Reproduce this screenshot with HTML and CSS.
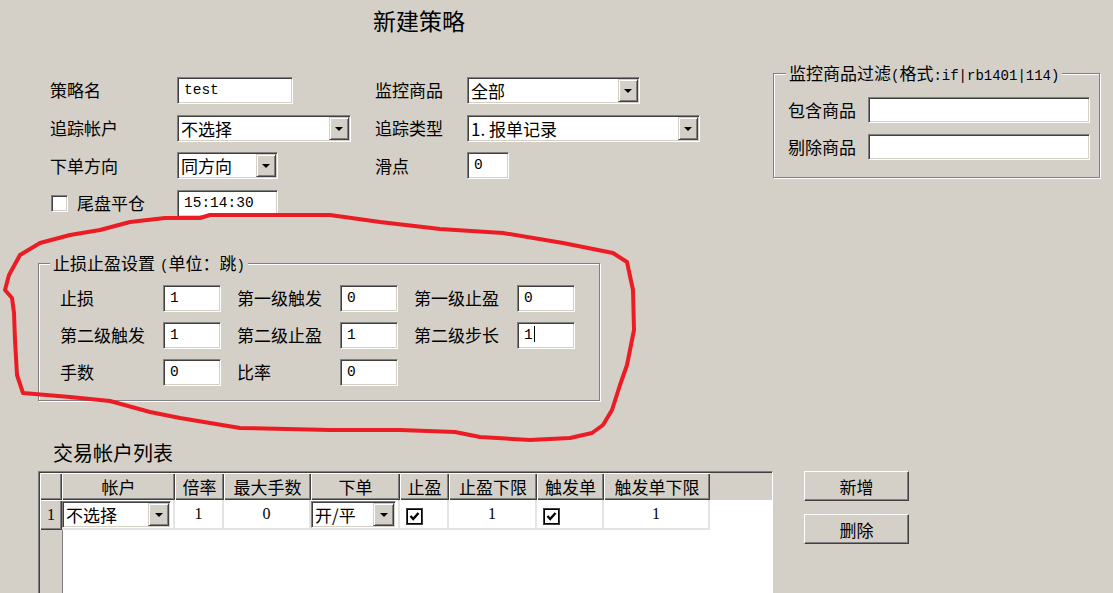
FILE: index.html
```html
<!DOCTYPE html>
<html lang="zh-CN">
<head>
<meta charset="utf-8">
<title>新建策略</title>
<link rel="stylesheet" href="styles.css">
</head>
<body>
<div class="page">
  <div class="title">新建策略</div>

  <div class="top">
    <div class="form">
      <span class="lbl">策略名</span>
      <div class="field"><div class="edit mono w116">test</div></div>
      <span class="lbl">监控商品</span>
      <div class="field"><div class="combo w173"><span class="val">全部</span><span class="drop"></span></div></div>

      <span class="lbl">追踪帐户</span>
      <div class="field"><div class="combo w174"><span class="val">不选择</span><span class="drop"></span></div></div>
      <span class="lbl">追踪类型</span>
      <div class="field"><div class="combo w233"><span class="val">1. 报单记录</span><span class="drop"></span></div></div>

      <span class="lbl">下单方向</span>
      <div class="field"><div class="combo w101"><span class="val">同方向</span><span class="drop"></span></div></div>
      <span class="lbl">滑点</span>
      <div class="field"><div class="edit mono w42">0</div></div>

      <span class="lbl chk-lbl"><span class="check"></span>尾盘平仓</span>
      <div class="field"><div class="edit mono w101">15:14:30</div></div>
    </div>

    <fieldset class="group filter">
      <legend>监控商品过滤<span class="m">(</span>格式<span class="m">:if|rb1401|114)</span></legend>
      <div class="filter-grid">
        <span class="lbl">包含商品</span>
        <div class="edit"></div>
        <span class="lbl">剔除商品</span>
        <div class="edit"></div>
      </div>
    </fieldset>
  </div>

  <fieldset class="group stop">
    <legend>止损止盈设置<span class="m sp">(</span>单位：跳<span class="m">)</span></legend>
    <div class="stop-grid">
      <span class="lbl">止损</span><div class="edit mono">1</div>
      <span class="lbl">第一级触发</span><div class="edit mono">0</div>
      <span class="lbl">第一级止盈</span><div class="edit mono">0</div>

      <span class="lbl">第二级触发</span><div class="edit mono">1</div>
      <span class="lbl">第二级止盈</span><div class="edit mono">1</div>
      <span class="lbl">第二级步长</span><div class="edit mono">1<span class="caret"></span></div>

      <span class="lbl">手数</span><div class="edit mono">0</div>
      <span class="lbl">比率</span><div class="edit mono">0</div>
    </div>
  </fieldset>

  <div class="list-title">交易帐户列表</div>

  <div class="bottom">
    <div class="grid">
      <table class="tbl">
        <colgroup>
          <col class="k-rh"><col class="k-acc"><col class="k-mul"><col class="k-max"><col class="k-ord">
          <col class="k-tp"><col class="k-tpl"><col class="k-trg"><col class="k-trl"><col>
        </colgroup>
        <thead>
          <tr>
            <th class="hd rh"></th>
            <th class="hd">帐户</th>
            <th class="hd">倍率</th>
            <th class="hd">最大手数</th>
            <th class="hd">下单</th>
            <th class="hd">止盈</th>
            <th class="hd">止盈下限</th>
            <th class="hd">触发单</th>
            <th class="hd">触发单下限</th>
            <th class="fill"></th>
          </tr>
        </thead>
        <tbody>
          <tr>
            <th class="hd rh num">1</th>
            <td><div class="combo cell-combo"><span class="val">不选择</span><span class="drop"></span></div></td>
            <td class="num">1</td>
            <td class="num">0</td>
            <td><div class="combo cell-combo"><span class="val">开/平</span><span class="drop"></span></div></td>
            <td><span class="check on"><svg viewBox="0 0 13 13" width="13" height="13"><polyline points="2.5,6 5.2,9 10.5,3" fill="none" stroke="#000" stroke-width="2.4"/></svg></span></td>
            <td class="num">1</td>
            <td><span class="check on"><svg viewBox="0 0 13 13" width="13" height="13"><polyline points="2.5,6 5.2,9 10.5,3" fill="none" stroke="#000" stroke-width="2.4"/></svg></span></td>
            <td class="num">1</td>
            <td class="blank"></td>
          </tr>
        </tbody>
      </table>
    </div>

    <div class="btns">
      <button class="btn">新增</button>
      <button class="btn">删除</button>
    </div>
  </div>

  <svg class="scribble" viewBox="0 0 1113 593" width="1113" height="593">
    <polyline fill="none" stroke="#ec1c24" stroke-width="4" stroke-linejoin="round" stroke-linecap="round"
      points="100,230 130,222 165,218 200,218 210,215 330,215 380,222 440,229 503,233 563,243 613,253 627,262 633,290 634,330 627,365 620,385 612,410 603,425 592,433 570,438 530,440 480,437 455,432 400,430 330,430 240,428 180,418 150,412 110,401 70,397 23,393 17,375 15,340 14,313 12,298 5,290 9,275 20,255 40,243 70,235 100,230"/>
  </svg>
</div>
</body>
</html>
```

FILE: styles.css
```css
html, body {
  margin: 0;
  padding: 0;
  background: #d4d0c8;
}

body {
  font-family: "Noto Sans CJK SC", "Noto Sans", sans-serif;
  font-size: 17px;
  color: #000;
  line-height: 1.2;
}

.page {
  position: relative;
  width: 1113px;
  height: 593px;
  overflow: hidden;
  background: #d4d0c8;
}

.title {
  height: 40px;
  line-height: 40px;
  padding-left: 373px;
  font-size: 23px;
}

/* ---------- top form ---------- */
.top {
  display: flex;
  align-items: flex-start;
}

.form {
  margin-left: 50px;
  margin-top: 37px;
  display: grid;
  grid-template-columns: 127px 198px 92px 233px;
  grid-auto-rows: 27px;
  row-gap: 10.7px;
  align-items: center;
}

.field {
  display: flex;
  align-items: center;
}

.lbl {
  white-space: nowrap;
}

.chk-lbl {
  display: flex;
  align-items: center;
  gap: 9px;
  margin-left: 1px;
}

/* sunken edit box */
.edit {
  box-sizing: border-box;
  height: 27px;
  background: #fff;
  border: 1px solid;
  border-color: #808080 #fff #fff #808080;
  box-shadow: inset 1px 1px 0 #404040, inset -1px -1px 0 #d4d0c8;
  padding-left: 6px;
  line-height: 25px;
  white-space: nowrap;
  overflow: hidden;
}

.mono {
  font-family: "Liberation Mono", "DejaVu Sans Mono", monospace;
  font-size: 14.5px;
}

.caret {
  display: inline-block;
  width: 1px;
  height: 16px;
  background: #000;
  vertical-align: -3px;
  margin-left: 1px;
}

.w116 { width: 116px; }
.w42 { width: 42px; }
.w101 { width: 101px; }
.w173 { width: 173px; }
.w174 { width: 174px; }
.w233 { width: 233px; }

/* combo box */
.combo {
  box-sizing: border-box;
  height: 27px;
  background: #fff;
  border: 1px solid;
  border-color: #808080 #fff #fff #808080;
  box-shadow: inset 1px 1px 0 #404040, inset -1px -1px 0 #d4d0c8;
  display: flex;
  align-items: stretch;
  padding: 1px;
}

.combo .val {
  flex: 1;
  padding-left: 2px;
  line-height: 23px;
  white-space: nowrap;
  overflow: hidden;
}

.drop {
  box-sizing: border-box;
  width: 20px;
  flex: none;
  background: #d4d0c8;
  border: 1px solid;
  border-color: #d4d0c8 #404040 #404040 #d4d0c8;
  box-shadow: inset 1px 1px 0 #fff, inset -1px -1px 0 #808080;
  display: flex;
  align-items: center;
  justify-content: center;
}

.drop::after {
  content: "";
  width: 0;
  height: 0;
  border-left: 4px solid transparent;
  border-right: 4px solid transparent;
  border-top: 4px solid #000;
  margin-top: 1px;
}

/* checkbox */
.check {
  box-sizing: border-box;
  display: inline-flex;
  align-items: center;
  justify-content: center;
  width: 17px;
  height: 17px;
  flex: none;
  background: #fff;
  border: 1px solid;
  border-color: #808080 #fff #fff #808080;
  box-shadow: inset 1px 1px 0 #404040, inset -1px -1px 0 #d4d0c8;
}

.check.on {
  border-color: #404040;
  box-shadow: inset 1px 1px 0 #000, inset -1px -1px 0 #000;
}

/* ---------- group boxes ---------- */
.group {
  box-sizing: border-box;
  margin: 0;
  padding: 0;
  min-width: 0;
  border: 1px solid #808080;
  box-shadow: inset 1px 1px 0 #fff, 1px 1px 0 #fff;
}

.group legend {
  box-sizing: border-box;
  height: 20px;
  padding: 0 3px;
  line-height: 20px;
  background: #d4d0c8;
  white-space: nowrap;
}

.m {
  font-family: "Liberation Mono", "DejaVu Sans Mono", monospace;
  font-size: 14px;
  line-height: 1;
}

.m.sp {
  margin-left: 5px;
}

.filter {
  width: 327px;
  margin-left: 73px;
  margin-top: 23px;
}

.filter legend {
  margin-left: 12px;
}

.filter-grid {
  margin: 14px 0 17px 14px;
  display: grid;
  grid-template-columns: 80px 222px;
  grid-auto-rows: 26px;
  row-gap: 11px;
  align-items: center;
}

.filter-grid .edit {
  height: 26px;
}

.stop {
  width: 562px;
  margin-left: 38px;
  margin-top: 36px;
}

.stop legend {
  margin-left: 11px;
}

.stop-grid {
  margin: 12px 0 14px 21px;
  display: grid;
  grid-template-columns: 87px 58px 87px 58px 87px 58px;
  column-gap: 16px;
  grid-auto-rows: 27px;
  row-gap: 10px;
  align-items: center;
}

/* ---------- account list ---------- */
.list-title {
  margin-top: 40px;
  margin-bottom: 6px;
  padding-left: 53px;
  font-size: 20px;
  line-height: 24px;
}

.bottom {
  display: flex;
  align-items: flex-start;
}

.grid {
  box-sizing: border-box;
  width: 735px;
  height: 140px;
  margin-left: 38px;
  border: 1px solid;
  border-color: #808080 #fff #fff #808080;
  box-shadow: inset 1px 1px 0 #404040;
  padding: 1px 0 0 1px;
  background:
    linear-gradient(to right, #d4d0c8 23px, #808080 23px, #808080 24px, #fff 24px);
}

.tbl {
  width: 732px;
  table-layout: fixed;
  border-collapse: separate;
  border-spacing: 0;
}

.k-rh { width: 22px; }
.k-acc { width: 113px; }
.k-mul { width: 49px; }
.k-max { width: 87px; }
.k-ord { width: 89px; }
.k-tp { width: 49px; }
.k-tpl { width: 88px; }
.k-trg { width: 67px; }
.k-trl { width: 106px; }

.tbl th, .tbl td {
  padding: 0;
  font-weight: normal;
}

.tbl thead th {
  height: 27px;
  background: #d4d0c8;
}

.hd {
  box-sizing: border-box;
  background: #d4d0c8;
  box-shadow: inset 1px 1px 0 #fff, inset -1px -1px 0 #404040, inset -2px -2px 0 #808080;
  text-align: center;
  line-height: 26px;
  white-space: nowrap;
}

.tbl tbody td {
  height: 30px;
  background: #fff;
  border-right: 2px solid #e6e4e0;
  border-bottom: 2px solid #e6e4e0;
  box-sizing: border-box;
}

.tbl tbody td.blank {
  border: 0;
}

.tbl tbody th.rh {
  height: 30px;
  font-family: "Liberation Serif", serif;
  font-size: 16px;
}

.num {
  text-align: center;
  font-family: "Liberation Serif", serif;
  font-size: 16px;
}

.cell-combo {
  height: 27px;
  margin: 1px 2px 0 0;
}

.cell-combo .drop {
  width: 21px;
}

.tbl td .check {
  margin-left: 6px;
  vertical-align: middle;
}

/* ---------- buttons ---------- */
.btns {
  margin-left: 31px;
  display: flex;
  flex-direction: column;
  gap: 13px;
}

.btn {
  box-sizing: border-box;
  width: 105px;
  height: 30px;
  margin: 0;
  padding: 0;
  font-family: "Noto Sans CJK SC", sans-serif;
  font-size: 17px;
  color: #000;
  background: #d4d0c8;
  border: 1px solid;
  border-color: #fff #404040 #404040 #fff;
  box-shadow: inset -1px -1px 0 #808080;
  border-radius: 0;
}

/* ---------- hand-drawn annotation overlay ---------- */
.scribble {
  position: absolute;
  left: 0;
  top: 0;
  pointer-events: none;
}
```
